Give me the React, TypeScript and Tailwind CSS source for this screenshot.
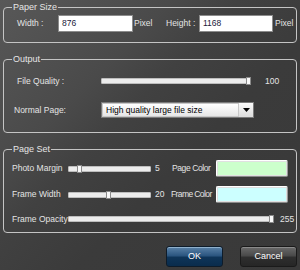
import React from 'react';

const font = { fontFamily: '"Liberation Sans", Arial, sans-serif' };

function Slider({ width, pos }: { width: number; pos: number }) {
  return (
    <div className="relative shrink-0 h-[6px] bg-[#ececec] border border-[#bdbdbd] rounded-[1px]" style={{ width }}>
      <div
        className="absolute top-[-2px] w-[5px] h-[8px] bg-[#f8f8f8] border border-[#8a8a8a]"
        style={{ left: pos }}
      />
    </div>
  );
}

function Group({ title, children, className = '' }: { title: string; children: React.ReactNode; className?: string }) {
  return (
    <fieldset className={`mx-[3px] border border-[#c4c4c4] rounded-[4px] ${className}`}>
      <legend className="ml-[8px] px-[1px] text-[9px] leading-[10px] text-[#e6e6e6]">{title}</legend>
      {children}
    </fieldset>
  );
}

function Swatch({ color }: { color: string }) {
  return (
    <div
      className="shrink-0 w-[72px] h-[17px] rounded-[2px] border border-t-white border-l-white border-r-[#9a9a9a] border-b-[#8a8a8a] shadow-[inset_0_0_0_1px_#e0e0e0]"
      style={{ backgroundColor: color }}
    />
  );
}

export default function App() {
  return (
    <div
      className="w-[300px] h-[270px] pt-[2px] text-[#e4e4e4] text-[8.5px] whitespace-nowrap bg-[linear-gradient(135deg,#585858_0%,#4a4a4a_30%,#414141_42%,#3b3b3b_60%,#393939_100%)] overflow-hidden"
      style={font}
    >
      <Group title="Paper Size" className="pt-[3px] pb-[10px]">
        <div className="flex items-center pl-[13px]">
          <span className="shrink-0 w-[41px]">Width :</span>
          <div className="shrink-0 w-[75px] h-[17px] bg-white border border-[#8c8c8c] text-[#1a1a3a] flex items-center pl-[3px]">876</div>
          <span className="shrink-0 ml-[1px] w-[32px]">Pixel</span>
          <span className="shrink-0 w-[33px]">Height :</span>
          <div className="shrink-0 w-[74px] h-[17px] bg-white border border-[#8c8c8c] text-[#1a1a3a] flex items-center pl-[3px]">1168</div>
          <span className="ml-[2px]">Pixel</span>
        </div>
      </Group>

      <Group title="Output" className="mt-[11px] pt-[10px] pb-[14px]">
        <div className="flex items-center h-[14px] pl-[13px]">
          <span className="shrink-0 w-[84px]">File Quality :</span>
          <Slider width={150} pos={144} />
          <span className="ml-[14px]">100</span>
        </div>
        <div className="flex items-center mt-[14px] pl-[10px]">
          <span className="shrink-0 w-[87px]">Normal Page:</span>
          <div className="shrink-0 w-[153px] h-[16px] bg-[#f4f4f4] border border-[#7a7a7a] flex items-center">
            <span className="flex-1 h-full border border-[#c8c8c8] bg-[linear-gradient(#ffffff,#e6e6e6)] text-black flex items-center pl-[3px]">
              High quality large file size
            </span>
            <span className="w-[14px] h-full flex items-center justify-center bg-[linear-gradient(#fafafa,#dcdcdc)]">
              <svg width="7" height="4" viewBox="0 0 7 4">
                <path d="M0 0h7L3.5 4z" fill="#000" />
              </svg>
            </span>
          </div>
        </div>
      </Group>

      <Group title="Page Set" className="mt-[11px] pt-[6px] pb-[7px]">
        <div className="flex items-center h-[17px] pl-[8px]">
          <span className="shrink-0 w-[56px]">Photo Margin</span>
          <Slider width={83} pos={8} />
          <span className="shrink-0 ml-[4px] w-[17px]">5</span>
          <span className="shrink-0 w-[44px] tracking-[-0.4px]">Page Color</span>
          <Swatch color="#ccffcc" />
        </div>
        <div className="flex items-center h-[17px] mt-[9px] pl-[8px]">
          <span className="shrink-0 w-[56px]">Frame Width</span>
          <Slider width={83} pos={37} />
          <span className="shrink-0 ml-[4px] w-[16px]">20</span>
          <span className="shrink-0 w-[45px] tracking-[-0.6px]">Frame Color</span>
          <Swatch color="#ccffff" />
        </div>
        <div className="flex items-center h-[12px] mt-[10px] pl-[8px]">
          <span className="shrink-0 w-[56px]">Frame Opacity</span>
          <Slider width={206} pos={200} />
          <span className="ml-[6px]">255</span>
        </div>
      </Group>

      <div className="flex justify-end gap-[17px] pr-[3px] mt-[13px]">
        <button className="w-[57px] h-[21px] rounded-[3px] border border-[#0e1c2a] bg-[linear-gradient(#5a82a8_0%,#2c5680_45%,#0e3458_55%,#0a2c4c_100%)] text-white text-[9px] shadow-[inset_0_1px_0_#8fb0cc]">
          OK
        </button>
        <button className="w-[57px] h-[21px] rounded-[3px] border border-[#1a1a1a] bg-[linear-gradient(#6a6a6a_0%,#4a4a4a_45%,#2e2e2e_55%,#262626_100%)] text-white text-[9px] shadow-[inset_0_1px_0_#8a8a8a]">
          Cancel
        </button>
      </div>
    </div>
  );
}
